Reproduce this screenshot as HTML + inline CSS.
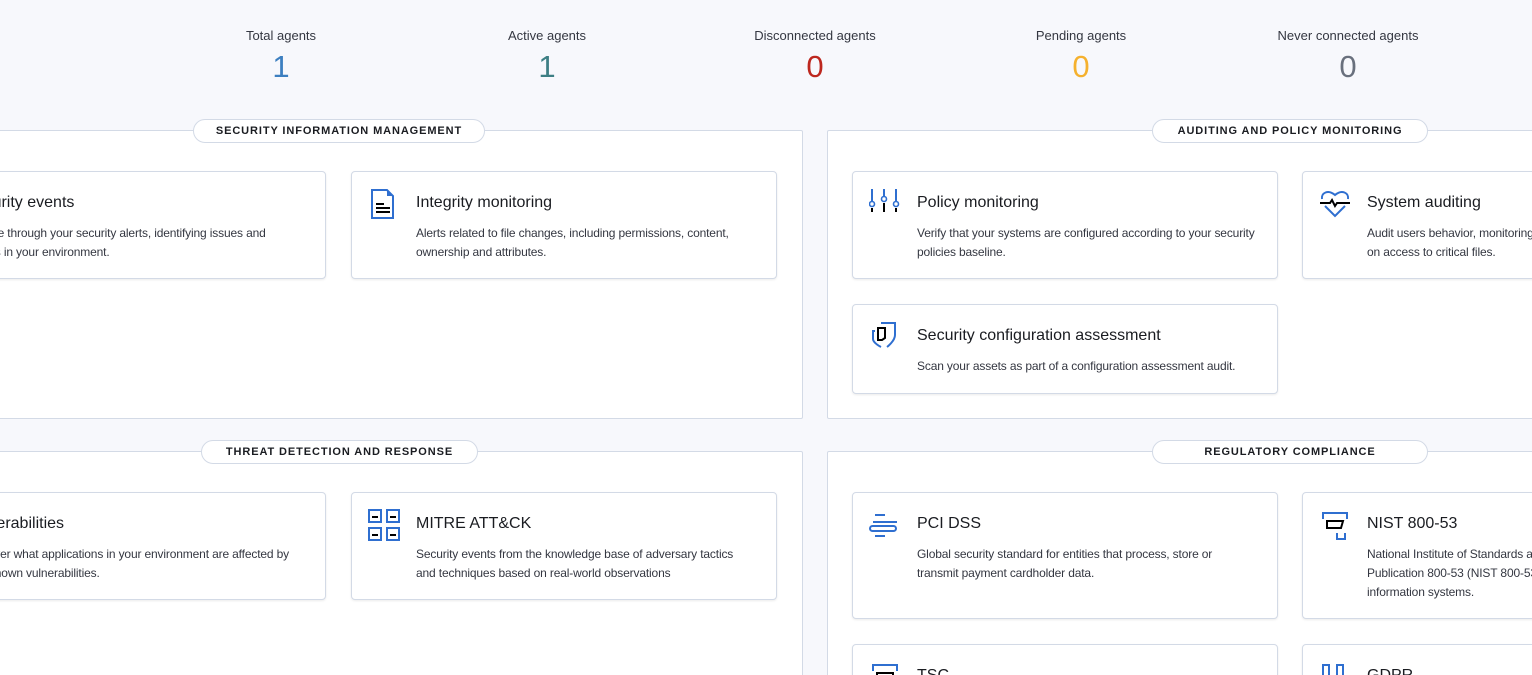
<!DOCTYPE html>
<html style="width:1532px;height:675px;overflow:hidden"><head><style>
body{margin:0;width:1532px;height:675px;overflow:hidden;background:#f7f8fc;font-family:"Liberation Sans",sans-serif;color:#343741;position:relative}
.st{position:absolute;top:28px;width:240px;margin-left:-120px;text-align:center}
.st .l{font-size:13px;color:#343741}
.st .n{font-size:31px;font-weight:300;margin-top:6px;line-height:36px}
.pn{position:absolute;background:#fff;border:1px solid #d3dae6;border-radius:2px}
.pill{position:absolute;height:22px;line-height:22px;background:#fff;border:1px solid #d3dae6;border-radius:12px;font-size:11px;font-weight:bold;letter-spacing:.9px;text-align:center;color:#1a1c21}
.cd{position:absolute;background:#fff;border:1px solid #d3dae6;border-radius:4px;box-shadow:0 1px 2px rgba(0,0,0,.08);width:424px}
.cd .ic{position:absolute;left:16px;top:16px;width:32px;height:32px}
.cd h3{position:absolute;left:64px;top:22px;margin:0;font-size:16px;font-weight:normal;color:#1a1c21;white-space:nowrap}
.cd p{position:absolute;left:64px;top:52px;margin:0;font-size:12px;letter-spacing:-0.15px;line-height:19px;width:339px;color:#343741}
</style></head><body>
<div class="st" style="left:281px"><div class="l">Total agents</div><div class="n" style="color:#3c7fc0">1</div></div>
<div class="st" style="left:547px"><div class="l">Active agents</div><div class="n" style="color:#3d7f84">1</div></div>
<div class="st" style="left:815px"><div class="l">Disconnected agents</div><div class="n" style="color:#bd271e">0</div></div>
<div class="st" style="left:1081px"><div class="l">Pending agents</div><div class="n" style="color:#f5b12e">0</div></div>
<div class="st" style="left:1348px"><div class="l">Never connected agents</div><div class="n" style="color:#69707d">0</div></div>

<div class="pn" style="left:-124px;top:130px;width:925px;height:287px"></div>
<div class="pn" style="left:827px;top:130px;width:925px;height:287px"></div>
<div class="pn" style="left:-124px;top:451px;width:925px;height:240px"></div>
<div class="pn" style="left:827px;top:451px;width:925px;height:240px"></div>

<div class="pill" style="left:193px;top:119px;width:290px">SECURITY INFORMATION MANAGEMENT</div>
<div class="pill" style="left:1152px;top:119px;width:274px">AUDITING AND POLICY MONITORING</div>
<div class="pill" style="left:201px;top:440px;width:275px">THREAT DETECTION AND RESPONSE</div>
<div class="pill" style="left:1152px;top:440px;width:274px">REGULATORY COMPLIANCE</div>

<div class="cd" style="left:-100px;top:171px;height:106px"><h3>Security events</h3><p>Browse through your security alerts, identifying issues and threats in your environment.</p></div>
<div class="cd" style="left:351px;top:171px;height:106px"><svg class="ic" viewBox="0 0 32 32"><path d="M4 2h15l6 6v22H4z" fill="none" stroke="#2f6fd0" stroke-width="2"/><path d="M19 2v6h6" fill="#2f6fd0"/><path d="M8 16h8M8 20h14M8 24h14" stroke="#000" stroke-width="2"/></svg><h3>Integrity monitoring</h3><p>Alerts related to file changes, including permissions, content, ownership and attributes.</p></div>

<div class="cd" style="left:852px;top:171px;height:106px"><svg class="ic" viewBox="0 0 32 32"><path d="M3 1v12M15 1v7M27 1v12" stroke="#2f6fd0" stroke-width="2"/><circle cx="3" cy="16" r="2.5" fill="none" stroke="#2f6fd0" stroke-width="1.6"/><circle cx="15" cy="11" r="2.5" fill="none" stroke="#2f6fd0" stroke-width="1.6"/><circle cx="27" cy="16" r="2.5" fill="none" stroke="#2f6fd0" stroke-width="1.6"/><path d="M3 20v4M15 15v9M27 20v4" stroke="#000" stroke-width="2"/></svg><h3>Policy monitoring</h3><p>Verify that your systems are configured according to your security policies baseline.</p></div>
<div class="cd" style="left:1302px;top:171px;height:106px"><svg class="ic" viewBox="0 0 32 32"><path d="M3 11C2 5 9 1 16 7c7-6 14-2 13 4M6 18l10 10 10-10" fill="none" stroke="#2f6fd0" stroke-width="2"/><path d="M1 15h10l2-3 3 6 2-3h13" fill="none" stroke="#000" stroke-width="2"/></svg><h3>System auditing</h3><p>Audit users behavior, monitoring command execution and alerting on access to critical files.</p></div>
<div class="cd" style="left:852px;top:304px;height:88px"><svg class="ic" viewBox="0 0 32 32"><path d="M12 2h14v12c0 6-8 12-8 12M6 10H4v8c0 4 8 8 8 8" fill="none" stroke="#2f6fd0" stroke-width="2"/><path d="M9 7h7v10l-3 2H9z" fill="none" stroke="#000" stroke-width="2"/></svg><h3>Security configuration assessment</h3><p>Scan your assets as part of a configuration assessment audit.</p></div>

<div class="cd" style="left:-100px;top:492px;height:106px"><h3>Vulnerabilities</h3><p>Discover what applications in your environment are affected by well-known vulnerabilities.</p></div>
<div class="cd" style="left:351px;top:492px;height:106px"><svg class="ic" viewBox="0 0 32 32"><g fill="none" stroke="#2f6fd0" stroke-width="2"><rect x="1" y="1" width="12" height="12"/><rect x="19" y="1" width="12" height="12"/><rect x="1" y="19" width="12" height="12"/><rect x="19" y="19" width="12" height="12"/></g><path d="M4 8h6M22 8h6M4 26h6M22 26h6" stroke="#000" stroke-width="2"/></svg><h3>MITRE ATT&amp;CK</h3><p>Security events from the knowledge base of adversary tactics and techniques based on real-world observations</p></div>

<div class="cd" style="left:852px;top:492px;height:125px"><svg class="ic" viewBox="0 0 32 32"><path d="M6 6h10M4 13h24M6 27h10" stroke="#2f6fd0" stroke-width="2"/><rect x="1" y="17" width="26" height="5" rx="2.5" fill="none" stroke="#2f6fd0" stroke-width="2"/></svg><h3>PCI DSS</h3><p>Global security standard for entities that process, store or transmit payment cardholder data.</p></div>
<div class="cd" style="left:1302px;top:492px;height:125px"><svg class="ic" viewBox="0 0 32 32"><path d="M4 10V4h24v6M18 24v6h8v-6" fill="none" stroke="#2f6fd0" stroke-width="2"/><path d="M8 12h16l-2 7H8z" fill="none" stroke="#000" stroke-width="2"/></svg><h3>NIST 800-53</h3><p>National Institute of Standards and Technology Special Publication 800-53 (NIST 800-53) sets guidelines for federal information systems.</p></div>
<div class="cd" style="left:852px;top:644px;height:60px"><svg class="ic" viewBox="0 0 32 32"><path d="M4 10V4h24v6" fill="none" stroke="#2f6fd0" stroke-width="2"/><path d="M8 12h16v8H8z" fill="none" stroke="#000" stroke-width="2"/></svg><h3>TSC</h3></div>
<div class="cd" style="left:1302px;top:644px;height:60px"><svg class="ic" viewBox="0 0 32 32"><path d="M4 14V4h6v10M18 14V4h6v10" fill="none" stroke="#2f6fd0" stroke-width="2"/></svg><h3>GDPR</h3></div>
</body></html>
